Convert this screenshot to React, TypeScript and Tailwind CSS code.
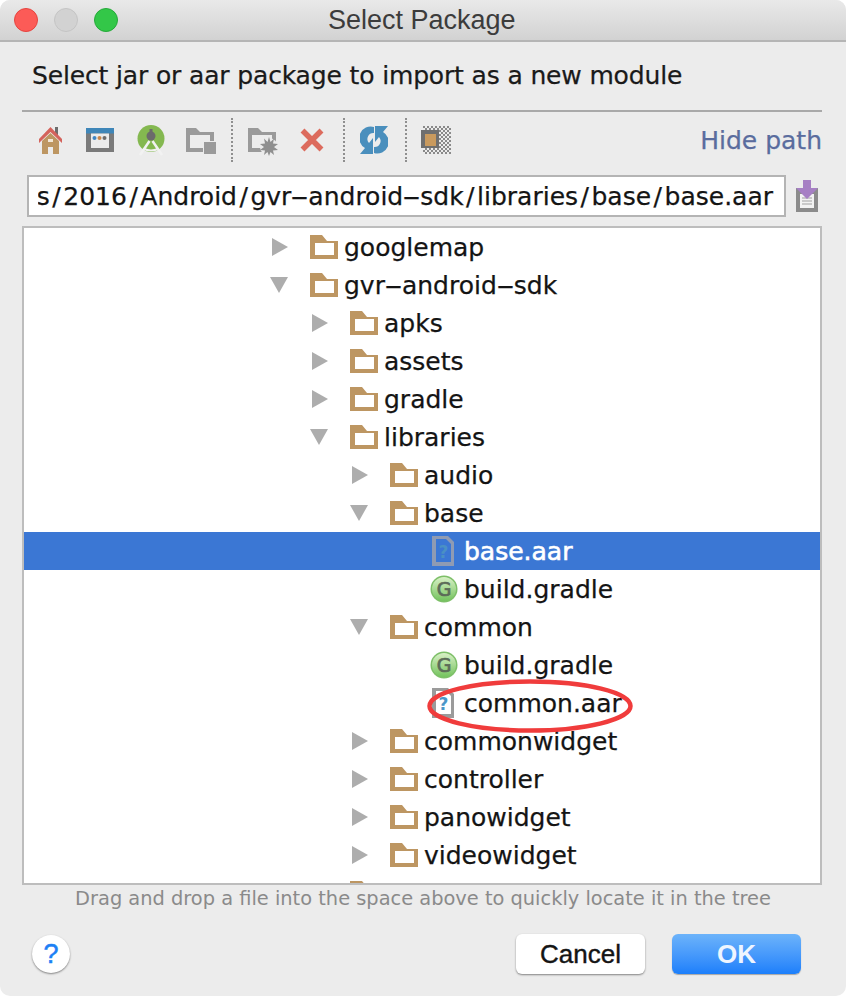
const FONT = "font-['DejaVu_Sans',sans-serif]";

type Row = {
    name: string;
    depth: number;
    kind: "closed" | "open" | "gradle" | "aar";
    selected?: boolean;
};

const rows: Row[] = [
    { name: "googlemap", depth: 0, kind: "closed" },
    { name: "gvr-android-sdk", depth: 0, kind: "open" },
    { name: "apks", depth: 1, kind: "closed" },
    { name: "assets", depth: 1, kind: "closed" },
    { name: "gradle", depth: 1, kind: "closed" },
    { name: "libraries", depth: 1, kind: "open" },
    { name: "audio", depth: 2, kind: "closed" },
    { name: "base", depth: 2, kind: "open" },
    { name: "base.aar", depth: 3, kind: "aar", selected: true },
    { name: "build.gradle", depth: 3, kind: "gradle" },
    { name: "common", depth: 2, kind: "open" },
    { name: "build.gradle", depth: 3, kind: "gradle" },
    { name: "common.aar", depth: 3, kind: "aar" },
    { name: "commonwidget", depth: 2, kind: "closed" },
    { name: "controller", depth: 2, kind: "closed" },
    { name: "panowidget", depth: 2, kind: "closed" },
    { name: "videowidget", depth: 2, kind: "closed" },
    { name: "utils", depth: 1, kind: "closed" },
];

// the reference font has a hyphen about as wide as a minus sign
function WideHyphens({ text }: { text: string }) {
    const parts = text.split("-");
    return (
        <>
            {parts.map((part, i) => (
                <span key={i}>
                    {i > 0 && <span className="inline-block w-[17px] scale-x-[2.1] text-center">-</span>}
                    {part}
                </span>
            ))}
        </>
    );
}

// same for the slashes of the path field
function PathText({ path }: { path: string }) {
    const parts = path.split("/");
    return (
        <>
            {parts.map((part, i) => (
                <span key={i}>
                    {i > 0 && <span className="mx-[2.500px]">/</span>}
                    <WideHyphens text={part} />
                </span>
            ))}
        </>
    );
}

function FolderIcon() {
    return (
        <svg width="28" height="24" viewBox="0 0 28 24" className="shrink-0">
            <path d="M0 0H12L17 6H28V24H0Z" fill="#bd9662" />
            <rect x="5" y="8" width="19" height="12" fill="#fff" />
        </svg>
    );
}

function FileIcon({ selected }: { selected?: boolean }) {
    return (
        <svg width="22" height="30" viewBox="0 0 22 30" className="ml-[2px] shrink-0">
            <path d="M0 0H16L22 6V30H0Z" fill={selected ? "#8f9bb3" : "#9b9b9b"} />
            <path d="M4 3H14L19 8V26H4Z" fill={selected ? "#3b77d4" : "#fff"} />
            <text
                x="11.500"
                y="22"
                textAnchor="middle"
                fontSize="17"
                fontWeight="700"
                fontFamily="'DejaVu Sans', sans-serif"
                fill={selected ? "#4a90c4" : "#4a97c9"}
            >
                ?
            </text>
        </svg>
    );
}

function GradleIcon() {
    return (
        <svg width="28" height="28" viewBox="0 0 28 28" className="shrink-0">
            <defs>
                <linearGradient id="gradleFill" x1="0" y1="0" x2="0" y2="1">
                    <stop offset="0" stopColor="#d8f0c6" />
                    <stop offset="1" stopColor="#74c35e" />
                </linearGradient>
            </defs>
            <circle cx="14" cy="14" r="13.5" fill="#7dbf68" />
            <circle cx="14" cy="14" r="12" fill="url(#gradleFill)" />
            <text
                x="14"
                y="20.500"
                textAnchor="middle"
                fontSize="19"
                fontWeight="400"
                stroke="#5c6b58"
                strokeWidth="0.7"
                fontFamily="'DejaVu Sans', sans-serif"
                fill="#5c6b58"
            >
                G
            </text>
        </svg>
    );
}

function TreeRow({ row }: { row: Row }) {
    const arrowLeft = [272, 312, 352, 392][row.depth];
    const isFile = row.kind === "gradle" || row.kind === "aar";
    return (
        <div
            className={`flex h-[38px] shrink-0 items-center ${row.selected ? "bg-[#3b77d4] text-white" : "text-[#141414]"}`}
            style={{ paddingLeft: arrowLeft - 24 }}
        >
            <div className="flex w-[38px] shrink-0 justify-start">
                {row.kind === "closed" && (
                    <svg width="16" height="18" viewBox="0 0 16 18">
                        <path d="M0 0L16 9L0 18Z" fill="#adadad" />
                    </svg>
                )}
                {row.kind === "open" && (
                    <svg width="18" height="16" viewBox="0 0 18 16" className="-ml-[2px]">
                        <path d="M0 0H18L9 16Z" fill="#adadad" />
                    </svg>
                )}
            </div>
            <div className="flex w-[34px] shrink-0">
                {row.kind === "gradle" && <GradleIcon />}
                {row.kind === "aar" && <FileIcon selected={row.selected} />}
                {!isFile && <FolderIcon />}
            </div>
            <span
                className={`whitespace-nowrap text-[25px] leading-none ${row.selected ? "[-webkit-text-stroke:0.6px_#fff]" : "[-webkit-text-stroke:0.25px]"}`}
            >
                <WideHyphens text={row.name} />
            </span>
        </div>
    );
}

function Separator({ className }: { className: string }) {
    return <div className={`h-[44px] w-0 shrink-0 border-l-2 border-dotted border-[#8f8f8f] ${className}`} />;
}

function Toolbar() {
    return (
        <div className="ml-[22px] mr-[24px] flex h-[56px] items-center">
            {/* home */}
            <svg width="25" height="32" viewBox="0 0 25 32" className="ml-[16px] shrink-0">
                <path d="M17 3h3v8h-3z" fill="#6d6d6d" />
                <path d="M1 15L12.500 3L24 15V19L12.500 8L1 19Z" fill="#d4635c" />
                <path d="M4 17L12.500 9L21 17V30H15V23H10V30H4Z" fill="#bd9662" />
                <rect x="10" y="15" width="5" height="3" fill="#f2e7d6" />
            </svg>
            {/* window */}
            <svg width="28" height="32" viewBox="0 0 28 32" className="ml-[23px] shrink-0">
                <rect x="0" y="4" width="28" height="24" fill="#7a7a7a" />
                <rect x="0" y="4" width="28" height="5.500" fill="#3f86b8" />
                <rect x="5" y="9.500" width="18" height="14.500" fill="#ececec" />
                <circle cx="8.500" cy="14" r="2" fill="#3f86c4" />
                <circle cx="13.500" cy="14" r="2" fill="#c9874a" />
                <circle cx="18.500" cy="14" r="2" fill="#6d6d6d" />
            </svg>
            {/* android studio */}
            <svg width="28" height="32" viewBox="0 0 28 32" className="ml-[23px] shrink-0">
                <circle cx="14" cy="14.500" r="13.500" fill="#84b850" />
                <circle cx="14" cy="12" r="4.500" fill="#6b6b6b" />
                <rect x="12.500" y="5" width="3" height="4" fill="#6b6b6b" />
                <path d="M12.500 17L3 31" stroke="#f2f2f2" strokeWidth="2.500" />
                <path d="M15.500 17L25 31" stroke="#f2f2f2" strokeWidth="2.500" />
                <path d="M7 25Q14 28 21 25" stroke="#f2f2f2" strokeWidth="2" fill="none" />
            </svg>
            {/* folder */}
            <svg width="30" height="32" viewBox="0 0 30 32" className="ml-[21px] shrink-0">
                <path d="M0 4H10L14 8H28V28H0Z" fill="#9a9a9a" />
                <rect x="4" y="11" width="20" height="13" fill="#ececec" />
                <rect x="17" y="17" width="13" height="13" fill="#ececec" />
                <rect x="18" y="18" width="12" height="12" fill="#9a9a9a" />
            </svg>
            <Separator className="ml-[15px]" />
            {/* new folder */}
            <svg width="30" height="32" viewBox="0 0 30 32" className="ml-[15px] shrink-0">
                <path d="M0 4H10L14 8H28V28H0Z" fill="#9a9a9a" />
                <rect x="4" y="11" width="20" height="13" fill="#ececec" />
                <circle cx="21" cy="23" r="9" fill="#ececec" />
                <path
                    d="M21 13l1.500 5 3.500-3.500-1 5 5 .5-4 3 4 3-5 .5 1 4.500-3.500-3-1.500 4-1.500-4-3.500 3 1-4.500-5-.5 4-3-4-3 5-.5-1-5 3.500 3.500z"
                    fill="#8f8f8f"
                />
            </svg>
            {/* delete */}
            <svg width="24" height="32" viewBox="0 0 24 32" className="ml-[22px] shrink-0">
                <path d="M2.500 6.500L21.500 25.500M21.500 6.500L2.500 25.500" stroke="#dc6b5d" strokeWidth="5.500" />
            </svg>
            <Separator className="ml-[19px]" />
            {/* sync */}
            <svg width="28" height="32" viewBox="0 0 28 32" className="ml-[15px] shrink-0">
                <path d="M5 24A11.500 11.500 0 0 1 14 3V9A6 6 0 0 0 9 19L13 14V30H0Z" fill="#4a8fbd" />
                <path d="M23 8A11.500 11.500 0 0 1 14 29V23A6 6 0 0 0 19 13L15 18V2H28Z" fill="#4a8fbd" />
            </svg>
            <Separator className="ml-[17px]" />
            {/* show hidden */}
            <svg width="30" height="32" viewBox="0 0 30 32" className="ml-[14px] shrink-0">
                <defs>
                    <pattern id="checker" width="4" height="4" patternUnits="userSpaceOnUse">
                        <rect width="2" height="2" fill="#8a8a8a" />
                        <rect x="2" y="2" width="2" height="2" fill="#8a8a8a" />
                    </pattern>
                </defs>
                <rect x="2" y="2" width="28" height="28" fill="url(#checker)" />
                <rect x="0" y="6" width="18" height="18" fill="#6f6f6f" />
                <rect x="4" y="10" width="11" height="12" fill="#c99a5e" />
            </svg>
            <span className="ml-auto text-[25px] leading-none text-[#5a6c9e] [-webkit-text-stroke:0.25px]">Hide path</span>
        </div>
    );
}

export default function App() {
    return (
        <div className={`flex h-[996px] w-[846px] flex-col overflow-hidden rounded-[10px] bg-[#ececec] ${FONT}`}>
            <div className="flex h-[42px] shrink-0 items-center border-b-2 border-[#b5b5b5] bg-gradient-to-b from-[#e9e9e9] to-[#d2d2d2] pl-[14px]">
                <span className="h-6 w-6 rounded-full border border-[#e5443f] bg-[#fc5b57]" />
                <span className="ml-[16px] h-6 w-6 rounded-full border border-[#c4c4c4] bg-[#d2d2d2]" />
                <span className="ml-[16px] h-6 w-6 rounded-full border border-[#25a93a] bg-[#33c748]" />
                <span className="ml-[210px] font-['Liberation_Sans',sans-serif] text-[27px] leading-none text-[#3c3c3c]">
                    Select Package
                </span>
            </div>

            <div className="ml-[32px] mt-[21px] h-[26px] whitespace-nowrap text-[25px] leading-[26px] tracking-[-0.15px] text-[#1a1a1a] [-webkit-text-stroke:0.25px]">
                Select jar or aar package to import as a new module
            </div>

            <div className="ml-[22px] mr-[24px] mt-[21px] h-[2px] bg-[#a9a9a9]" />

            <Toolbar />

            <div className="mt-[7px] flex h-[42px] items-center pl-[27px]">
                <div className="flex h-full w-[759px] items-center border-2 border-[#b4b4b4] bg-white px-[9px]">
                    <div className="flex w-full justify-end overflow-hidden pr-[2px] pt-[1px]">
                        <span className="shrink-0 whitespace-nowrap text-[25px] leading-[34px] text-[#141414] [-webkit-text-stroke:0.25px]">
                            <PathText path="projects/2016/Android/gvr-android-sdk/libraries/base/base.aar" />
                        </span>
                    </div>
                </div>
                <svg width="24" height="32" viewBox="0 0 24 32" className="ml-[9px] shrink-0">
                    <rect x="1" y="8" width="22" height="24" fill="#8b8b8b" />
                    <rect x="5" y="14" width="14" height="14" fill="#f2f2f2" />
                    <path d="M7 18h10M7 21h10M7 24h10" stroke="#a0a0a0" strokeWidth="1" />
                    <path d="M8 0H16V8H23L12 19L1 8H8Z" fill="#a67fc4" />
                </svg>
            </div>

            <div className="relative ml-[22px] mr-[24px] mt-[9px] h-[659px] shrink-0 overflow-hidden border-2 border-[#bdbdbd] bg-white">
                <div className="flex flex-col">
                    {rows.map((row, i) => (
                        <TreeRow key={`${row.name}-${i}`} row={row} />
                    ))}
                </div>
                <svg
                    width="212"
                    height="60"
                    viewBox="0 0 212 60"
                    className="absolute left-[400px] top-[448px]"
                >
                    <ellipse cx="106" cy="30" rx="100.500" ry="24.500" fill="none" stroke="#f03c3c" strokeWidth="4.500" />
                </svg>
            </div>

            <div className="mt-[1px] text-center text-[19.400px] leading-[26px] text-[#8a8a8a]">
                Drag and drop a file into the space above to quickly locate it in the tree
            </div>

            <div className="mt-[22px] flex items-center pl-[32px] pr-[45px]">
                <div className="flex h-[38px] w-[38px] items-center justify-center rounded-full bg-white font-['Liberation_Sans',sans-serif] text-[27px] text-[#1c80f5] shadow-[0_1px_2px_rgba(0,0,0,0.45)] [-webkit-text-stroke:0.5px]">
                    ?
                </div>
                <div className="ml-auto flex h-[40px] w-[129px] items-center justify-center rounded-[6px] bg-white font-['Liberation_Sans',sans-serif] text-[26px] text-[#141414] shadow-[0_1px_2px_rgba(0,0,0,0.45)] [-webkit-text-stroke:0.4px]">
                    Cancel
                </div>
                <div className="ml-[27px] flex h-[40px] w-[129px] items-center justify-center rounded-[6px] bg-gradient-to-b from-[#6cb3fa] to-[#1b7ffb] font-['Liberation_Sans',sans-serif] text-[26px] font-bold text-[#eef5ff] shadow-[0_1px_1px_rgba(0,0,0,0.3)]">
                    OK
                </div>
            </div>
        </div>
    );
}
